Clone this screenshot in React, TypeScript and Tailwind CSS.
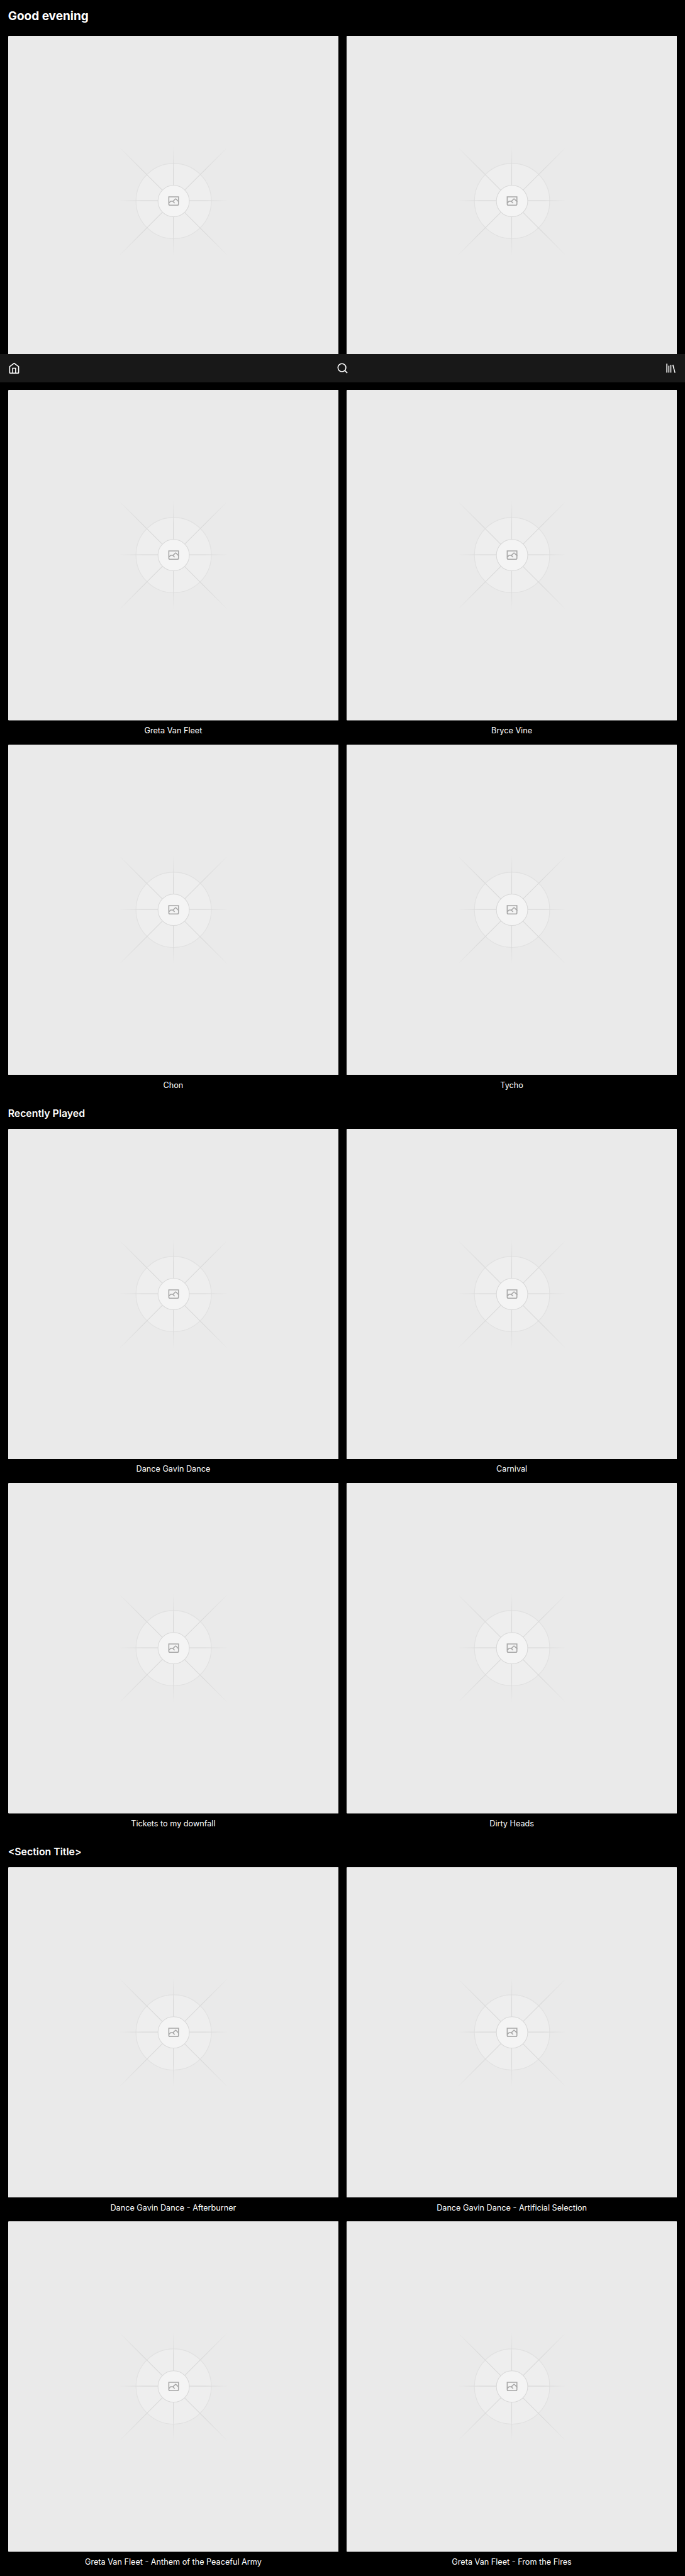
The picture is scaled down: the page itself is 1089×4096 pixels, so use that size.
import { useId } from "react";

type Section = { title: string; large?: boolean; items: string[] };

const sections: Section[] = [
  {
    title: "Good evening",
    large: true,
    items: ["", "", "Greta Van Fleet", "Bryce Vine", "Chon", "Tycho"],
  },
  {
    title: "Recently Played",
    items: ["Dance Gavin Dance", "Carnival", "Tickets to my downfall", "Dirty Heads"],
  },
  {
    title: "<Section Title>",
    items: [
      "Dance Gavin Dance - Afterburner",
      "Dance Gavin Dance - Artificial Selection",
      "Greta Van Fleet - Anthem of the Peaceful Army",
      "Greta Van Fleet - From the Fires",
    ],
  },
];

function FadeStops() {
  return (
    <>
      <stop stopColor="#C9C9C9" stopOpacity="0" />
      <stop offset=".208" stopColor="#C9C9C9" />
      <stop offset=".792" stopColor="#C9C9C9" />
      <stop offset="1" stopColor="#C9C9C9" stopOpacity="0" />
    </>
  );
}

function Placeholder() {
  const id = useId();
  return (
    <svg viewBox="0 0 1200 1200" fill="none" preserveAspectRatio="none" className="block h-166 w-full">
      <rect width="1200" height="1200" fill="#EAEAEA" rx="3" />
      <g opacity=".5">
        <g opacity=".5">
          <circle cx="600.709" cy="599.88" r="136.62" fill="#FAFAFA" />
          <circle cx="600.709" cy="599.88" r="136.62" stroke="#C9C9C9" strokeWidth="2.418" />
        </g>
        <path stroke={`url(#${id}a)`} strokeWidth="2.418" d="M404.276 796.597l391.441-391.44" />
        <path stroke={`url(#${id}b)`} strokeWidth="2.418" d="M404.846 598.671h391.726" />
        <path stroke={`url(#${id}c)`} strokeWidth="2.418" d="M599.5 795.742V404.017" />
        <path stroke={`url(#${id}d)`} strokeWidth="2.418" d="m795.717 796.597-391.441-391.44" />
        <circle cx="600.709" cy="599.88" r="56.825" fill="#fff" />
        <path
          fill="#666"
          fillRule="evenodd"
          clipRule="evenodd"
          d="M616.426 586.58h-31.434v16.176l3.553-3.554.531-.531h9.068l.074-.074 8.463-8.463h2.565l7.18 7.181V586.58Zm-15.715 14.654 3.698 3.699 1.283 1.282-2.565 2.565-1.282-1.283-5.2-5.199h-6.066l-5.514 5.514-.073.073v2.876a2.418 2.418 0 0 0 2.418 2.418h26.598a2.418 2.418 0 0 0 2.418-2.418v-8.317l-8.463-8.463-7.181 7.181-.071.072Zm-19.347 5.442v4.085a6.045 6.045 0 0 0 6.046 6.045h26.598a6.044 6.044 0 0 0 6.045-6.045v-7.108l1.356-1.355-1.282-1.283-.074-.073v-17.989h-38.689v23.43l-.146.146.146.147Z"
        />
        <circle cx="600.709" cy="599.88" r="56.825" stroke="#C9C9C9" strokeWidth="2.418" />
      </g>
      <defs>
        <linearGradient id={`${id}a`} x1="404.28" y1="796.6" x2="795.72" y2="405.16" gradientUnits="userSpaceOnUse">
          <FadeStops />
        </linearGradient>
        <linearGradient id={`${id}b`} x1="796.912" y1="599.963" x2="404.507" y2="599.965" gradientUnits="userSpaceOnUse">
          <FadeStops />
        </linearGradient>
        <linearGradient id={`${id}c`} x1="600.792" y1="403.677" x2="600.794" y2="796.082" gradientUnits="userSpaceOnUse">
          <FadeStops />
        </linearGradient>
        <linearGradient id={`${id}d`} x1="404.85" y1="403.903" x2="796.972" y2="796.02" gradientUnits="userSpaceOnUse">
          <FadeStops />
        </linearGradient>
      </defs>
    </svg>
  );
}

function NavBar() {
  return (
    <nav className="absolute inset-x-0 top-178 flex h-14 items-center justify-between bg-[#181818] px-4 text-white">
      <svg viewBox="0 0 24 24" fill="none" stroke="currentColor" strokeWidth="2" strokeLinejoin="round" className="size-6">
        <path d="M3 8.6 12 2l9 6.6V21a1 1 0 0 1-1 1H4a1 1 0 0 1-1-1Z" />
        <path d="M9 22V12h6v10" strokeLinejoin="miter" />
      </svg>
      <svg viewBox="0 0 24 24" fill="none" stroke="currentColor" strokeWidth="2" className="size-6">
        <circle cx="10.9" cy="10.9" r="8" />
        <path d="m16.6 16.6 5 5" />
      </svg>
      <svg viewBox="0 0 24 24" fill="none" stroke="currentColor" strokeWidth="2" className="size-6">
        <path d="M4 3v18M8 7v14M12 5v16M16 5l4.3 16" />
      </svg>
    </nav>
  );
}

export default function App() {
  return (
    <div className="relative h-[4096px] w-full overflow-hidden bg-black px-4 pt-4 font-['Inter',sans-serif] text-white [--spacing:3.1654px]">
      {sections.map((section) => (
        <section key={section.title}>
          {section.large ? (
            <h1 className="mb-6 text-[18.99px] leading-8 font-bold">{section.title}</h1>
          ) : (
            <h2 className="mt-8 mb-4 text-[15.83px] leading-7 font-semibold">{section.title}</h2>
          )}
          <div className="grid grid-cols-2 gap-4">
            {section.items.map((name, i) => (
              <figure key={i}>
                <Placeholder />
                <figcaption className="mt-2 h-6 text-center text-[12.66px] leading-6">{name}</figcaption>
              </figure>
            ))}
          </div>
        </section>
      ))}
      <NavBar />
    </div>
  );
}
